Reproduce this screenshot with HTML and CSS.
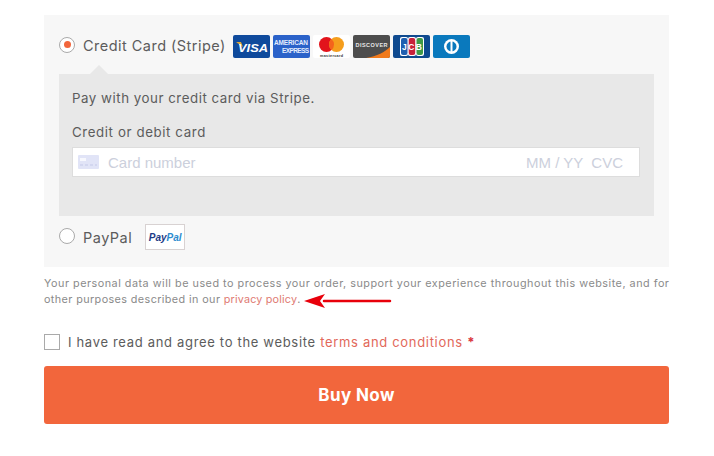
FILE: index.html
```html
<!DOCTYPE html>
<html lang="en">
<head>
<meta charset="utf-8">
<title>Checkout</title>
<link rel="stylesheet" href="styles.css">
</head>
<body>
<main class="checkout">
  <section class="methods">
    <div class="method method-card">
      <span class="radio radio-on"></span>
      <span class="method-label">Credit Card (Stripe)</span>
      <span class="cards">
        <svg class="card" viewBox="0 0 37 23"><rect width="37" height="23" rx="2" fill="#0f4a9c"/><path d="M3 7h5l2 5z" fill="#e0a93a"/><text x="20" y="16.500" class="visa" textLength="30" lengthAdjust="spacingAndGlyphs">VISA</text></svg>
        <svg class="card" viewBox="0 0 37 23"><rect width="37" height="23" rx="2" fill="#2b62c9"/><text x="1" y="10" class="amex" textLength="34">AMERICAN</text><text x="9" y="18" class="amex" textLength="27">EXPRESS</text></svg>
        <svg class="card" viewBox="0 0 37 23"><rect width="37" height="23" rx="2" fill="#fff"/><circle cx="13.500" cy="9.500" r="7.500" fill="#e2131b"/><circle cx="23.500" cy="9.500" r="7.500" fill="#f59e1d"/><path d="M18.500 3.900a7.500 7.500 0 0 1 0 11.200a7.500 7.500 0 0 1 0-11.200z" fill="#f4641c"/><text x="18.500" y="21.500" class="mc" textLength="23">mastercard</text></svg>
        <svg class="card" viewBox="0 0 37 23"><rect width="37" height="23" rx="2" fill="#4d4d4d"/><path d="M13 23C24 21 32 17 37 12v9a2 2 0 0 1-2 2z" fill="#f07a1c"/><text x="18.500" y="12" class="disc" textLength="32">DISCOVER</text></svg>
        <svg class="card" viewBox="0 0 37 23"><rect width="37" height="23" rx="2" fill="#0f4a8f"/><rect x="7" y="2" width="8" height="19" rx="2" fill="#fff"/><rect x="15" y="2" width="8" height="19" rx="2" fill="#fff"/><rect x="23" y="2" width="8" height="19" rx="2" fill="#fff"/><rect x="8" y="3" width="6.500" height="17" rx="2" fill="#1f5fb0"/><rect x="15.700" y="3" width="6.500" height="17" rx="2" fill="#c8213a"/><rect x="23.500" y="3" width="6.500" height="17" rx="2" fill="#3f9a46"/><text x="19" y="15" class="jcb" textLength="20">JCB</text></svg>
        <svg class="card" viewBox="0 0 37 23"><rect width="37" height="23" rx="2" fill="#0a79bd"/><circle cx="18.500" cy="11.500" r="7.500" fill="#fff"/><circle cx="18.500" cy="11.500" r="5" fill="#0a79bd"/><rect x="17.500" y="5" width="2" height="13" fill="#fff"/></svg>
      </span>
    </div>
    <div class="card-box">
      <p class="pay-note">Pay with your credit card via Stripe.</p>
      <label class="field-label">Credit or debit card</label>
      <div class="stripe-input">
        <svg class="card-glyph" viewBox="0 0 21 14"><rect width="21" height="14" rx="1" fill="#e1e4f7"/><rect x="2" y="3" width="6" height="3" fill="#f7f8fe"/><path d="M2 10h3M7 10h3M12 10h3M17 10h2" stroke="#c4c9e8" stroke-width="1"/></svg>
        <span class="ph ph-number">Card number</span>
        <span class="ph ph-date">MM / YY</span>
        <span class="ph ph-cvc">CVC</span>
      </div>
    </div>
    <div class="method method-paypal">
      <span class="radio"></span>
      <span class="method-label">PayPal</span>
      <span class="paypal-badge"><span class="pp-a">Pay</span><span class="pp-b">Pal</span></span>
    </div>
  </section>
  <p class="privacy">Your personal data will be used to process your order, support your experience throughout this website, and for<br><span class="privacy-tail">other purposes described in our <a href="#" class="link">privacy policy</a>.</span><svg class="arrow" viewBox="0 0 90 18"><path d="M88 9H22" stroke="#e8000b" stroke-width="2.500" stroke-linecap="round"/><path d="M2 9l21-7-5 7 5 7z" fill="#e8000b"/></svg></p>
  <label class="terms">
    <span class="checkbox"></span>
    <span>I have read and agree to the website <a href="#" class="link">terms and conditions</a> <b class="req">*</b></span>
  </label>
  <button class="buy" type="button">Buy Now</button>
</main>
</body>
</html>
```

FILE: styles.css
```css
* { box-sizing: border-box; }
html, body { margin: 0; padding: 0; background: #fff; }
body { width: 714px; height: 456px; overflow: hidden; font-family: "Inter", "Open Sans", sans-serif; color: #5c5c5c; }
.checkout { width: 625px; margin-left: 44px; padding-top: 15px; }
.methods { background: #f7f7f7; height: 252px; padding: 20px 15px 0; }
.method { display: flex; align-items: center; }
.method-card { height: 23px; }
.radio { width: 16px; height: 16px; border-radius: 50%; border: 1px solid #aaa; background: #fff; flex: none; display: flex; align-items: center; justify-content: center; }
.method-card .radio { margin-bottom: 4px; }
.method-paypal .radio { margin-bottom: 2px; }
.radio-on::after { content: ""; width: 7px; height: 7px; border-radius: 50%; background: #f2663c; }
.method-label { margin-left: 8px; font-size: 14.500px; color: #5c5c5c; letter-spacing: 0.47px; white-space: nowrap; }
.method-card .method-label { margin-bottom: 3px; }
.cards { display: flex; gap: 3px; margin-left: 7px; }
.card { width: 37px; height: 23px; display: block; }
.visa { font: italic 800 11.500px "Liberation Sans", sans-serif; fill: #fff; text-anchor: middle; }
.amex { font: 700 6.500px "Liberation Sans", sans-serif; fill: #e3ecfd; }
.mc { font: 700 3.800px "Liberation Sans", sans-serif; fill: #333; text-anchor: middle; }
.disc { font: 700 5.500px "Liberation Sans", sans-serif; fill: #e8e8e8; text-anchor: middle; }
.jcb { font: 700 8.500px "Liberation Sans", sans-serif; fill: #fff; text-anchor: middle; }
.card-box { position: relative; margin-top: 16px; height: 142px; background: #e8e8e8; padding: 15px 14px 0 13px; }
.card-box::before { content: ""; position: absolute; left: 31px; top: -9px; border: 9px solid transparent; border-top: 0; border-bottom-color: #e8e8e8; }
.pay-note { margin: 0; font-size: 13.300px; line-height: 18px; letter-spacing: 0.53px; }
.field-label { display: block; margin-top: 16px; font-size: 13.300px; line-height: 18px; letter-spacing: 0.6px; }
.stripe-input { display: flex; align-items: center; height: 30px; margin-top: 6px; background: #fff; border: 1px solid #ddd; padding: 0 16px 0 5px; }
.card-glyph { width: 21px; height: 14px; flex: none; }
.ph { font-family: "Liberation Sans", sans-serif; font-size: 15px; color: #ccd0dc; white-space: nowrap; }
.ph-number { margin-left: 9px; }
.ph-date { margin-left: auto; }
.ph-cvc { margin-left: 8px; }
.method-paypal { margin-top: 7px; height: 28px; }
.paypal-badge { display: flex; align-items: center; justify-content: center; width: 40px; height: 26px; margin-left: 13px; background: #fff; border: 1px solid #d8d2d2; font: italic 800 10px "Liberation Sans", sans-serif; }
.pp-a { color: #1d3a86; }
.pp-b { color: #2c8ccf; }
.privacy { position: relative; margin: 9px 0 0; font-size: 10.800px; line-height: 16px; letter-spacing: 0.51px; color: #8a8a8a; white-space: nowrap; }
.privacy-tail { letter-spacing: 0.4px; }
.privacy .link { letter-spacing: 0.17px; color: #e07a72; }
.link { color: #e2685a; text-decoration: none; }
.arrow { position: absolute; left: 258px; top: 16px; width: 90px; height: 18px; }
.terms { display: flex; align-items: center; gap: 8px; margin-top: 26px; font-size: 13px; letter-spacing: 0.68px; color: #5c5c5c; white-space: nowrap; }
.checkbox { width: 16px; height: 16px; background: #fff; border: 1px solid #aaa; flex: none; }
.req { color: #d9363e; }
.buy { display: block; width: 100%; height: 58px; margin-top: 16px; background: #f2663c; border: 0; border-radius: 3px; color: #fff; font-family: "Inter", sans-serif; font-size: 17px; font-weight: 700; letter-spacing: 0.4px; }
```
